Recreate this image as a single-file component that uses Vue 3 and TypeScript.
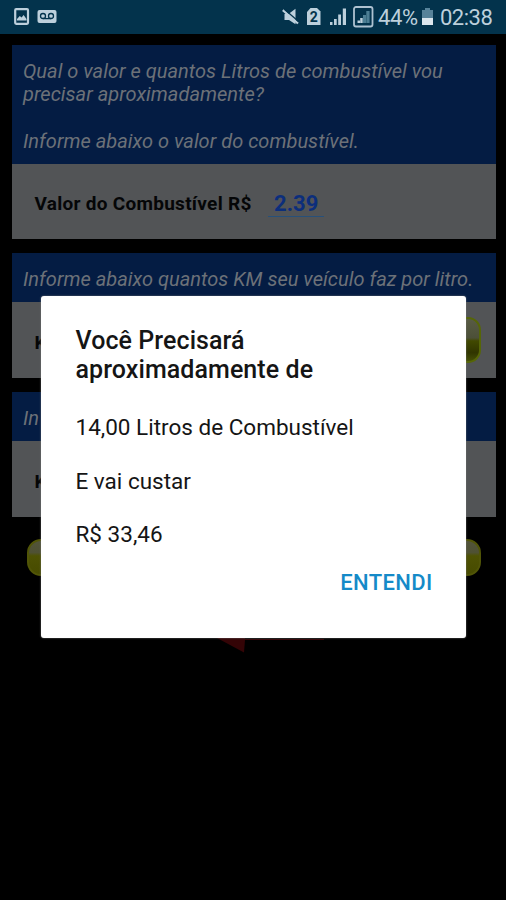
<script setup lang="ts">
interface Panel {
  lines: string[]
  label: string
  value?: string
  action?: boolean
}

const panels: Panel[] = [
  {
    lines: [
      'Qual o valor e quantos Litros de combustível vou',
      'precisar aproximadamente?',
      '',
      'Informe abaixo o valor do combustível.',
    ],
    label: 'Valor do Combustível R$',
    value: '2.39',
  },
  { lines: ['Informe abaixo quantos KM seu veículo faz por litro.'], label: 'K', action: true },
  { lines: ['In'], label: 'K' },
]
</script>

<template>
  <div class="screen">
    <header class="status">
      <svg class="status-left" width="48" height="20" viewBox="0 0 48 20">
        <rect x="2.2" y="2.2" width="12.8" height="14.6" rx="1" fill="none" stroke="#bdd0dc" stroke-width="2.200" />
        <path d="M4 12 6.800 9l1.800 1.500 2-2.500L13.500 12v1.500H4z" fill="#bdd0dc" />
        <rect x="24.500" y="3" width="19" height="13" rx="2" fill="#bdd0dc" />
        <circle cx="30" cy="9" r="2.500" fill="none" stroke="#03334c" stroke-width="1.300" />
        <circle cx="38" cy="9" r="2.500" fill="none" stroke="#03334c" stroke-width="1.300" />
        <path d="M30 11.600h8" stroke="#03334c" stroke-width="1.300" />
      </svg>
      <div class="status-right">
        <svg width="93" height="24" viewBox="0 0 93 24">
          <path d="M3.500 9h4l7-5.300v15.600L8 15H3.500z" fill="#bdd0dc" />
          <path d="M1.800 5.200 17 18.500" stroke="#bdd0dc" stroke-width="2.200" />
          <path d="M3.400 4.300 17.600 16.500" stroke="#03334c" stroke-width="1.200" />
          <path d="M29.500 3H36l3.500 3.500V20H26V7z" fill="#bdd0dc" />
          <text x="28.700" y="16.600" class="sim">2</text>
          <path d="M49 17h2.500v3H49zM53 14h2.700v6H53zM57.200 9.500H60V20h-2.800zM61.800 3.500H65V20h-3.200z" fill="#bdd0dc" />
          <rect x="73" y="2" width="18.500" height="19.500" rx="2" fill="none" stroke="#aec2d1" stroke-width="1.800" />
          <path d="M76.500 15.500h2.500V18h-2.500zM79.200 13h2.500v5h-2.500z" fill="#bdd0dc" />
          <path d="M82 10h3v8h-3zM85.300 6h3.300v12h-3.300z" fill="#4c7e94" />
        </svg>
        <span class="percent">44%</span>
        <svg class="battery" width="13" height="20" viewBox="0 0 13 20">
          <path d="M4 1h5v2h3v8H1V3h3z" fill="#57839a" />
          <path d="M1 11h11v7H1z" fill="#dce7ee" />
        </svg>
        <span class="clock">02:38</span>
      </div>
    </header>

    <main class="content">
      <section v-for="(panel, i) in panels" :key="i" class="panel">
        <div class="panel-head" :class="{ tall: i === 0 }">
          <p v-for="(line, n) in panel.lines" :key="n">{{ line }}</p>
        </div>
        <div class="panel-body">
          <span class="label">{{ panel.label }}</span>
          <span v-if="panel.value" class="value">{{ panel.value }}</span>
          <span v-if="panel.action" class="pill"></span>
        </div>
      </section>
      <div class="actions">
        <span class="gem"></span>
        <span class="gem"></span>
      </div>
      <svg class="arrow" width="130" height="30" viewBox="0 0 130 30">
        <path d="M14 13 42 1v13h79v1H42l-1 12.500z" fill="#340406" />
      </svg>
    </main>

    <div class="dialog" role="dialog">
      <h1>Você Precisará<br />aproximadamente de</h1>
      <p>14,00 Litros de Combustível</p>
      <p>E vai custar</p>
      <p>R$ 33,46</p>
      <button type="button">ENTENDI</button>
    </div>
  </div>
</template>

<style>
body {
  margin: 0;
  background: #000;
}
</style>

<style scoped>
.screen {
  position: relative;
  width: 506px;
  height: 900px;
  overflow: hidden;
  background: #000;
  font-family: Roboto, sans-serif;
}
.status {
  box-sizing: border-box;
  height: 34px;
  display: flex;
  justify-content: space-between;
  padding: 0 14px 0 13px;
  background: #03334c;
  color: #bdd0dc;
}
.status-left {
  margin-top: 7px;
}
.status-right {
  display: flex;
  align-items: flex-start;
  padding-top: 5px;
}
.sim {
  font: bold 14px Roboto, sans-serif;
  fill: #03334c;
}
.percent,
.clock {
  font-size: 22px;
  line-height: 25px;
}
.percent {
  width: 41px;
  margin-left: 4px;
  letter-spacing: -0.4px;
}
.battery {
  margin: 2px 6px 0 2px;
}
.clock {
  width: 52px;
  letter-spacing: -0.5px;
}
.content {
  display: flex;
  flex-direction: column;
  gap: 14px;
  padding: 11px 10px 0 11.500px;
}
.panel-head {
  box-sizing: border-box;
  height: 49px;
  padding: 15px 0 0 11.500px;
  background: #041c43;
  color: #6c7178;
  font-size: 20px;
  font-style: italic;
  letter-spacing: 0.02px;
  line-height: 23.300px;
  white-space: nowrap;
}
.panel-head.tall {
  height: 119px;
}
.panel-head p {
  margin: 0;
  min-height: 23.300px;
}
.panel-body {
  box-sizing: border-box;
  height: 76px;
  display: flex;
  align-items: center;
  padding: 4px 15.500px 0 23px;
  background: #525456;
}
.tall + .panel-body {
  height: 75px;
}
.label {
  color: #050607;
  font-size: 19px;
  font-weight: 700;
  letter-spacing: 0.280px;
}
.value {
  width: 50px;
  padding-left: 6px;
  margin-left: 16.500px;
  border-bottom: 1.500px solid #27507a;
  color: #0c2e7c;
  font-size: 22px;
  font-weight: 700;
  line-height: 25px;
}
.pill {
  box-sizing: border-box;
  width: 60px;
  height: 46px;
  margin: -4px 0 0 auto;
  border: 2px solid #566607;
  border-radius: 13px;
  background: linear-gradient(#585b44 0, #4c5038 45%, #414900 52%, #303500 80%, #454f05);
}
.actions {
  display: flex;
  justify-content: space-between;
  padding: 7.500px 15.500px 0 15.500px;
}
.gem {
  box-sizing: border-box;
  width: 190px;
  height: 37px;
  border: 2px solid #515507;
  border-radius: 14px;
  background: linear-gradient(#52543a 0, #4f5133 35%, #4e5203 45%, #474b00);
}
.arrow {
  margin: 35px 0 0 191px;
}
.dialog {
  position: absolute;
  left: 41px;
  top: 296px;
  box-sizing: border-box;
  width: 425px;
  height: 342px;
  padding: 30px 33.500px 0 34.500px;
  border-radius: 3px;
  background: #fff;
  box-shadow: 0 0 2px #777;
  color: #151515;
  display: flex;
  flex-direction: column;
}
.dialog h1 {
  margin: 0 0 30px;
  font-size: 25px;
  font-weight: 500;
  letter-spacing: 0.080px;
  line-height: 29px;
}
.dialog p {
  margin: 0 0 26.500px;
  font-size: 22.500px;
  line-height: 27px;
}
.dialog button {
  align-self: flex-end;
  margin-top: -6px;
  padding: 0;
  border: 0;
  background: none;
  color: #158ac8;
  font: 500 22px/27px Roboto, sans-serif;
  letter-spacing: 0.350px;
}
</style>
